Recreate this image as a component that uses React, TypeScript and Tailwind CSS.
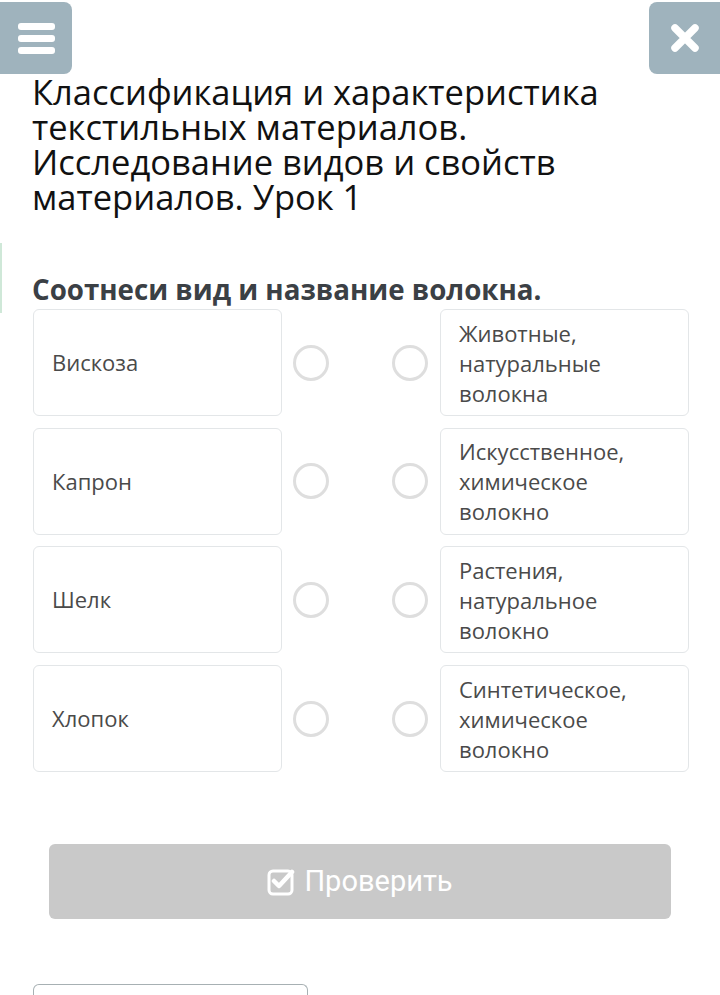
const pairs = [
  { left: 'Вискоза', right: ['Животные,', 'натуральные', 'волокна'] },
  { left: 'Капрон', right: ['Искусственное,', 'химическое', 'волокно'] },
  { left: 'Шелк', right: ['Растения,', 'натуральное', 'волокно'] },
  { left: 'Хлопок', right: ['Синтетическое,', 'химическое', 'волокно'] },
];

function Circle() {
  return <div className="w-[36px] h-[36px] shrink-0 rounded-full border-[3px] border-[#dedede] bg-white" />;
}

export default function App() {
  return (
    <div className="relative min-h-[995px] bg-white overflow-hidden" style={{ fontFamily: '"Open Sans", "Noto Sans", sans-serif' }}>
      {/* Top buttons */}
      <button className="absolute left-0 top-[2px] w-[72px] h-[72px] rounded-r-[8px] bg-[#9fb3bd] flex flex-col items-center justify-center gap-[5px]">
        <span className="block w-[37px] h-[7px] rounded-[3px] bg-white" />
        <span className="block w-[37px] h-[7px] rounded-[3px] bg-white" />
        <span className="block w-[37px] h-[7px] rounded-[3px] bg-white" />
      </button>
      <button className="absolute right-0 top-[2px] w-[71px] h-[72px] rounded-l-[8px] bg-[#9fb3bd] flex items-center justify-center">
        <svg width="30" height="30" viewBox="0 0 30 30">
          <path d="M5 5 L25 25 M25 5 L5 25" stroke="white" strokeWidth="7.5" strokeLinecap="round" />
        </svg>
      </button>

      {/* green marker */}
      <div className="absolute left-0 top-[243px] w-[2px] h-[70px] bg-[#cfe8d8]" />

      <div className="pl-[32px] pr-[32px] pt-[74px]">
        <h1 className="text-[34.5px] leading-[35px] text-[#111] font-normal">
          Классификация и характеристика текстильных материалов. Исследование видов и свойств материалов. Урок 1
        </h1>

        <h2 className="mt-[58px] text-[27.7px] leading-[34px] font-bold text-[#3b4045]">
          Соотнеси вид и название волокна.
        </h2>

        <div className="mt-[3px] flex flex-col gap-[11.7px]">
          {pairs.map((p) => (
            <div key={p.left} className="flex items-center pl-[1px]">
              <div className="w-[249px] h-[107px] shrink-0 rounded-[6px] border border-[#e3e6e8] flex items-center px-[18px] text-[22px] text-[#4a4a4a]">
                {p.left}
              </div>
              <div className="ml-[11px]"><Circle /></div>
              <div className="ml-[63px]"><Circle /></div>
              <div className="ml-[12px] w-[249px] h-[107px] shrink-0 rounded-[6px] border border-[#e3e6e8] flex flex-col justify-center px-[18px] text-[22px] leading-[30px] text-[#4a4a4a]">
                {p.right.map((l) => (
                  <span key={l}>{l}</span>
                ))}
              </div>
            </div>
          ))}
        </div>

        <div className="mt-[72px] px-[17px]">
          <button className="w-full h-[75px] rounded-[6px] bg-[#c9c9c9] flex items-center justify-center gap-[9px] text-white text-[29px]" style={{ fontFamily: 'Roboto, "Noto Sans", sans-serif' }}>
            <svg width="28" height="28" viewBox="0 0 28 28" fill="none">
              <rect x="2" y="3" width="23" height="23" rx="4" stroke="white" strokeWidth="3" />
              <path d="M7 13 L12 18 L25 4" stroke="white" strokeWidth="4.5" strokeLinecap="round" strokeLinejoin="round" />
            </svg>
            Проверить
          </button>
        </div>

        <div className="mt-[65px] ml-[1px] w-[275px] h-[20px] rounded-t-[6px] border border-b-0 border-[#a7b0b3]" />
      </div>
    </div>
  );
}
